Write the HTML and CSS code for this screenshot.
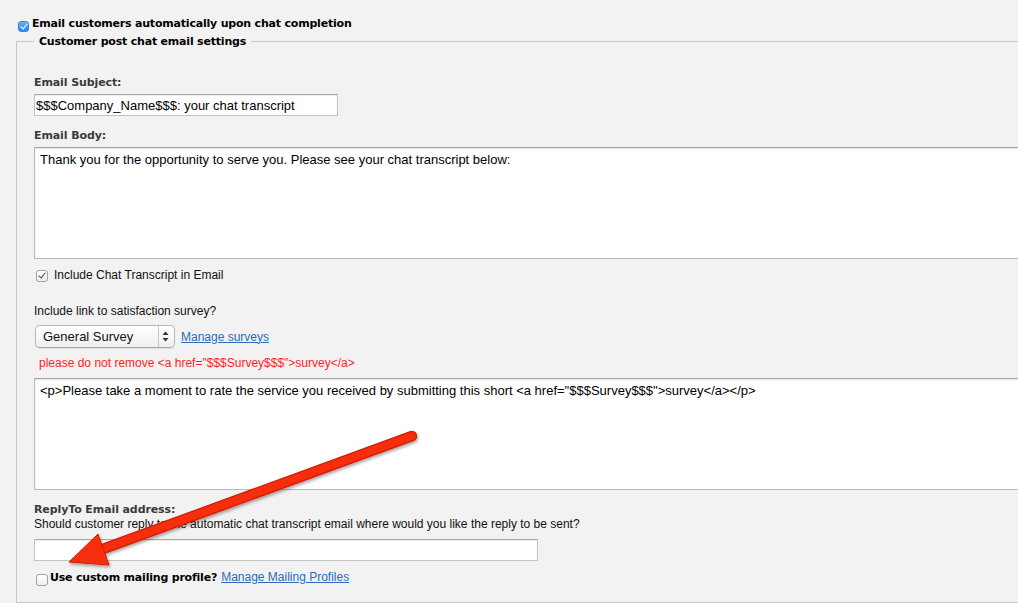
FILE: index.html
```html
<html lang="en">
<head>
    <meta charset="UTF-8">
    <meta name="viewport" content="width=device-width, initial-scale=1.0">
    <link rel="stylesheet" href="styles.css">
</head>
<body>
<div class="page">
    <label class="master"><input type="checkbox" class="check check-blue" checked>Email customers automatically upon chat completion</label>

    <fieldset class="settings">
        <legend>Customer post chat email settings</legend>

        <label class="field-label">Email Subject:</label>
        <input type="text" class="text-input subject" value="$$$Company_Name$$$: your chat transcript">

        <label class="field-label gap-12">Email Body:</label>
        <textarea class="area">Thank you for the opportunity to serve you. Please see your chat transcript below:</textarea>

        <label class="check-row gap-9"><input type="checkbox" class="check" checked> Include Chat Transcript in Email</label>

        <p class="plain gap-21">Include link to satisfaction survey?</p>
        <div class="select-row">
            <span class="select-wrap">
                <select class="select">
                    <option>General Survey</option>
                </select>
                <svg class="select-arrows" width="7" height="11" viewBox="0 0 7 11">
                    <path d="M3.5 0.5 L6.5 4 H0.5 Z M3.5 10.5 L6.5 7 H0.5 Z" fill="#333"/>
                </svg>
            </span>
            <a href="#" class="link">Manage surveys</a>
        </div>
        <p class="warning">please do not remove &lt;a href="$$$Survey$$$"&gt;survey&lt;/a&gt;</p>
        <textarea class="area survey-area">&lt;p&gt;Please take a moment to rate the service you received by submitting this short &lt;a href="$$$Survey$$$"&gt;survey&lt;/a&gt;&lt;/p&gt;</textarea>

        <label class="field-label gap-12">ReplyTo Email address:</label>
        <p class="plain">Should customer reply to the automatic chat transcript email where would you like the reply to be sent?</p>
        <input type="text" class="text-input reply">

        <div class="check-row bold-row gap-9">
            <input type="checkbox" class="check low">
            <span class="bold-text">Use custom mailing profile?</span>
            <a href="#" class="link">Manage Mailing Profiles</a>
        </div>
    </fieldset>

    <svg class="arrow" width="1018" height="603" viewBox="0 0 1018 603">
        <defs>
            <filter id="shadow" x="-10%" y="-10%" width="120%" height="130%">
                <feDropShadow dx="1" dy="2" stdDeviation="1.5" flood-color="#000" flood-opacity="0.35"/>
            </filter>
        </defs>
        <g filter="url(#shadow)">
            <line x1="412" y1="436" x2="100" y2="550" stroke="#d41c02" stroke-width="10.5" stroke-linecap="round"/>
            <line x1="412" y1="436" x2="100" y2="550" stroke="#f72d0e" stroke-width="8" stroke-linecap="round"/>
            <polygon points="69,562 98,534 109,565" fill="#f72d0e" stroke="#d41c02" stroke-width="1" stroke-linejoin="round"/>
        </g>
    </svg>
</div>
</body>
</html>
```

FILE: styles.css
```css
html, body {
    margin: 0;
    overflow: hidden;
}
body {
    background-color: #f2f2f2;
    font-family: "Liberation Sans", Arial, sans-serif;
    font-size: 12px;
    color: #111;
}
.page {
    position: relative;
    height: 603px;
    padding: 16px 0 0 17px;
    box-sizing: border-box;
}
.master {
    display: block;
    font-family: "DejaVu Sans", Verdana, sans-serif;
    font-weight: bold;
    font-size: 11px;
    letter-spacing: -0.2px;
    line-height: 16px;
    color: #000;
}
.settings {
    width: 1100px;
    margin: 2px 0 0 -1px;
    padding: 26px 0 17px 17px;
    border: 1px solid #c9c9c9;
    border-right: none;
    box-sizing: border-box;
}
.settings legend {
    padding: 0 5px;
    font-family: "DejaVu Sans", Verdana, sans-serif;
    font-weight: bold;
    font-size: 11px;
    letter-spacing: -0.2px;
    line-height: 15px;
    color: #000;
}
.field-label {
    display: block;
    font-family: "DejaVu Sans", Verdana, sans-serif;
    font-weight: bold;
    font-size: 11px;
    letter-spacing: -0.1px;
    line-height: 15px;
    color: #3a3a3a;
}
.gap-9 { margin-top: 9px; }
.gap-12 { margin-top: 12px; }
.plain {
    margin: 0;
    line-height: 15px;
    color: #111;
}
.plain.gap-21 { margin-top: 21px; }
.text-input {
    display: block;
    height: 22px;
    margin-top: 4px;
    padding: 0 2px 0 1px;
    border: 1px solid #c3c3c3;
    border-top-color: #a9a9a9;
    box-shadow: inset 0 1px 1px rgba(0, 0, 0, 0.08);
    background: #fff;
    box-sizing: border-box;
    font-family: "Liberation Sans", Arial, sans-serif;
    font-size: 13px;
    color: #000;
}
.subject {
    width: 304px;
}
.reply {
    width: 504px;
    margin-top: 7px;
}
.area {
    display: block;
    width: 1060px;
    height: 112px;
    margin-top: 4px;
    padding: 4px 5px;
    border: 1px solid #b9b9b9;
    border-top-color: #a3a3a3;
    box-shadow: inset 0 1px 2px rgba(0, 0, 0, 0.12);
    background: #fff;
    box-sizing: border-box;
    resize: none;
    font-family: "Liberation Sans", Arial, sans-serif;
    font-size: 13px;
    line-height: 16px;
    color: #000;
}
.survey-area {
    margin-top: 7px;
}
.check-row {
    display: flex;
    align-items: center;
    line-height: 15px;
    color: #111;
}
.check {
    appearance: none;
    -webkit-appearance: none;
    position: relative;
    width: 12px;
    height: 12px;
    margin: 1px 6px 0 2px;
    border: 1px solid #a2a2a2;
    border-radius: 3px;
    background: linear-gradient(#ffffff, #ededed);
    box-sizing: border-box;
    flex-shrink: 0;
}
.check:checked::after {
    content: "";
    position: absolute;
    left: 3px;
    top: 0;
    width: 3px;
    height: 6px;
    border: solid #4a4a4a;
    border-width: 0 1.5px 1.5px 0;
    transform: rotate(40deg);
}
.check-blue {
    display: inline-block;
    width: 11px;
    height: 11px;
    margin: 0 3px 0 1px;
    vertical-align: -5px;
    border-color: #3b86dc;
    background: linear-gradient(#69b1fb, #2c87f2);
}
.check-blue:checked::after {
    left: 3px;
    top: 0;
    border-color: #fff;
    border-width: 0 1.5px 1.5px 0;
}
.check.low {
    margin: 3px 2px -2px 2px;
}
.bold-text {
    font-family: "DejaVu Sans", Verdana, sans-serif;
    font-weight: bold;
    font-size: 11px;
    letter-spacing: -0.2px;
    color: #000;
    margin-right: 4px;
}
.select-row {
    display: flex;
    align-items: center;
    margin-top: 6px;
    margin-left: 1px;
}
.select-wrap {
    position: relative;
    display: inline-block;
}
.select {
    appearance: none;
    -webkit-appearance: none;
    width: 140px;
    height: 23px;
    margin: 0;
    padding: 0 0 0 7px;
    border: 1px solid #b8b8b8;
    border-bottom-color: #a5a5a5;
    border-radius: 5px;
    background: linear-gradient(to right, transparent 122px, #c6c6c6 122px, #c6c6c6 123px, transparent 123px),
                linear-gradient(#ffffff, #efefef);
    box-shadow: 0 1px 1px rgba(0, 0, 0, 0.08);
    font-family: "Liberation Sans", Arial, sans-serif;
    font-size: 13px;
    color: #111;
}
.select-arrows {
    position: absolute;
    right: 6px;
    top: 6px;
    pointer-events: none;
}
.link {
    margin-left: 6px;
    color: #2a6bb8;
    text-decoration: underline;
    font-size: 12px;
}
.bold-row .link {
    margin-left: 0;
}
.warning {
    margin: 8px 0 0;
    padding-left: 5px;
    line-height: 15px;
    color: #ff1f1f;
}
.arrow {
    position: absolute;
    left: 0;
    top: 0;
    pointer-events: none;
}
```
